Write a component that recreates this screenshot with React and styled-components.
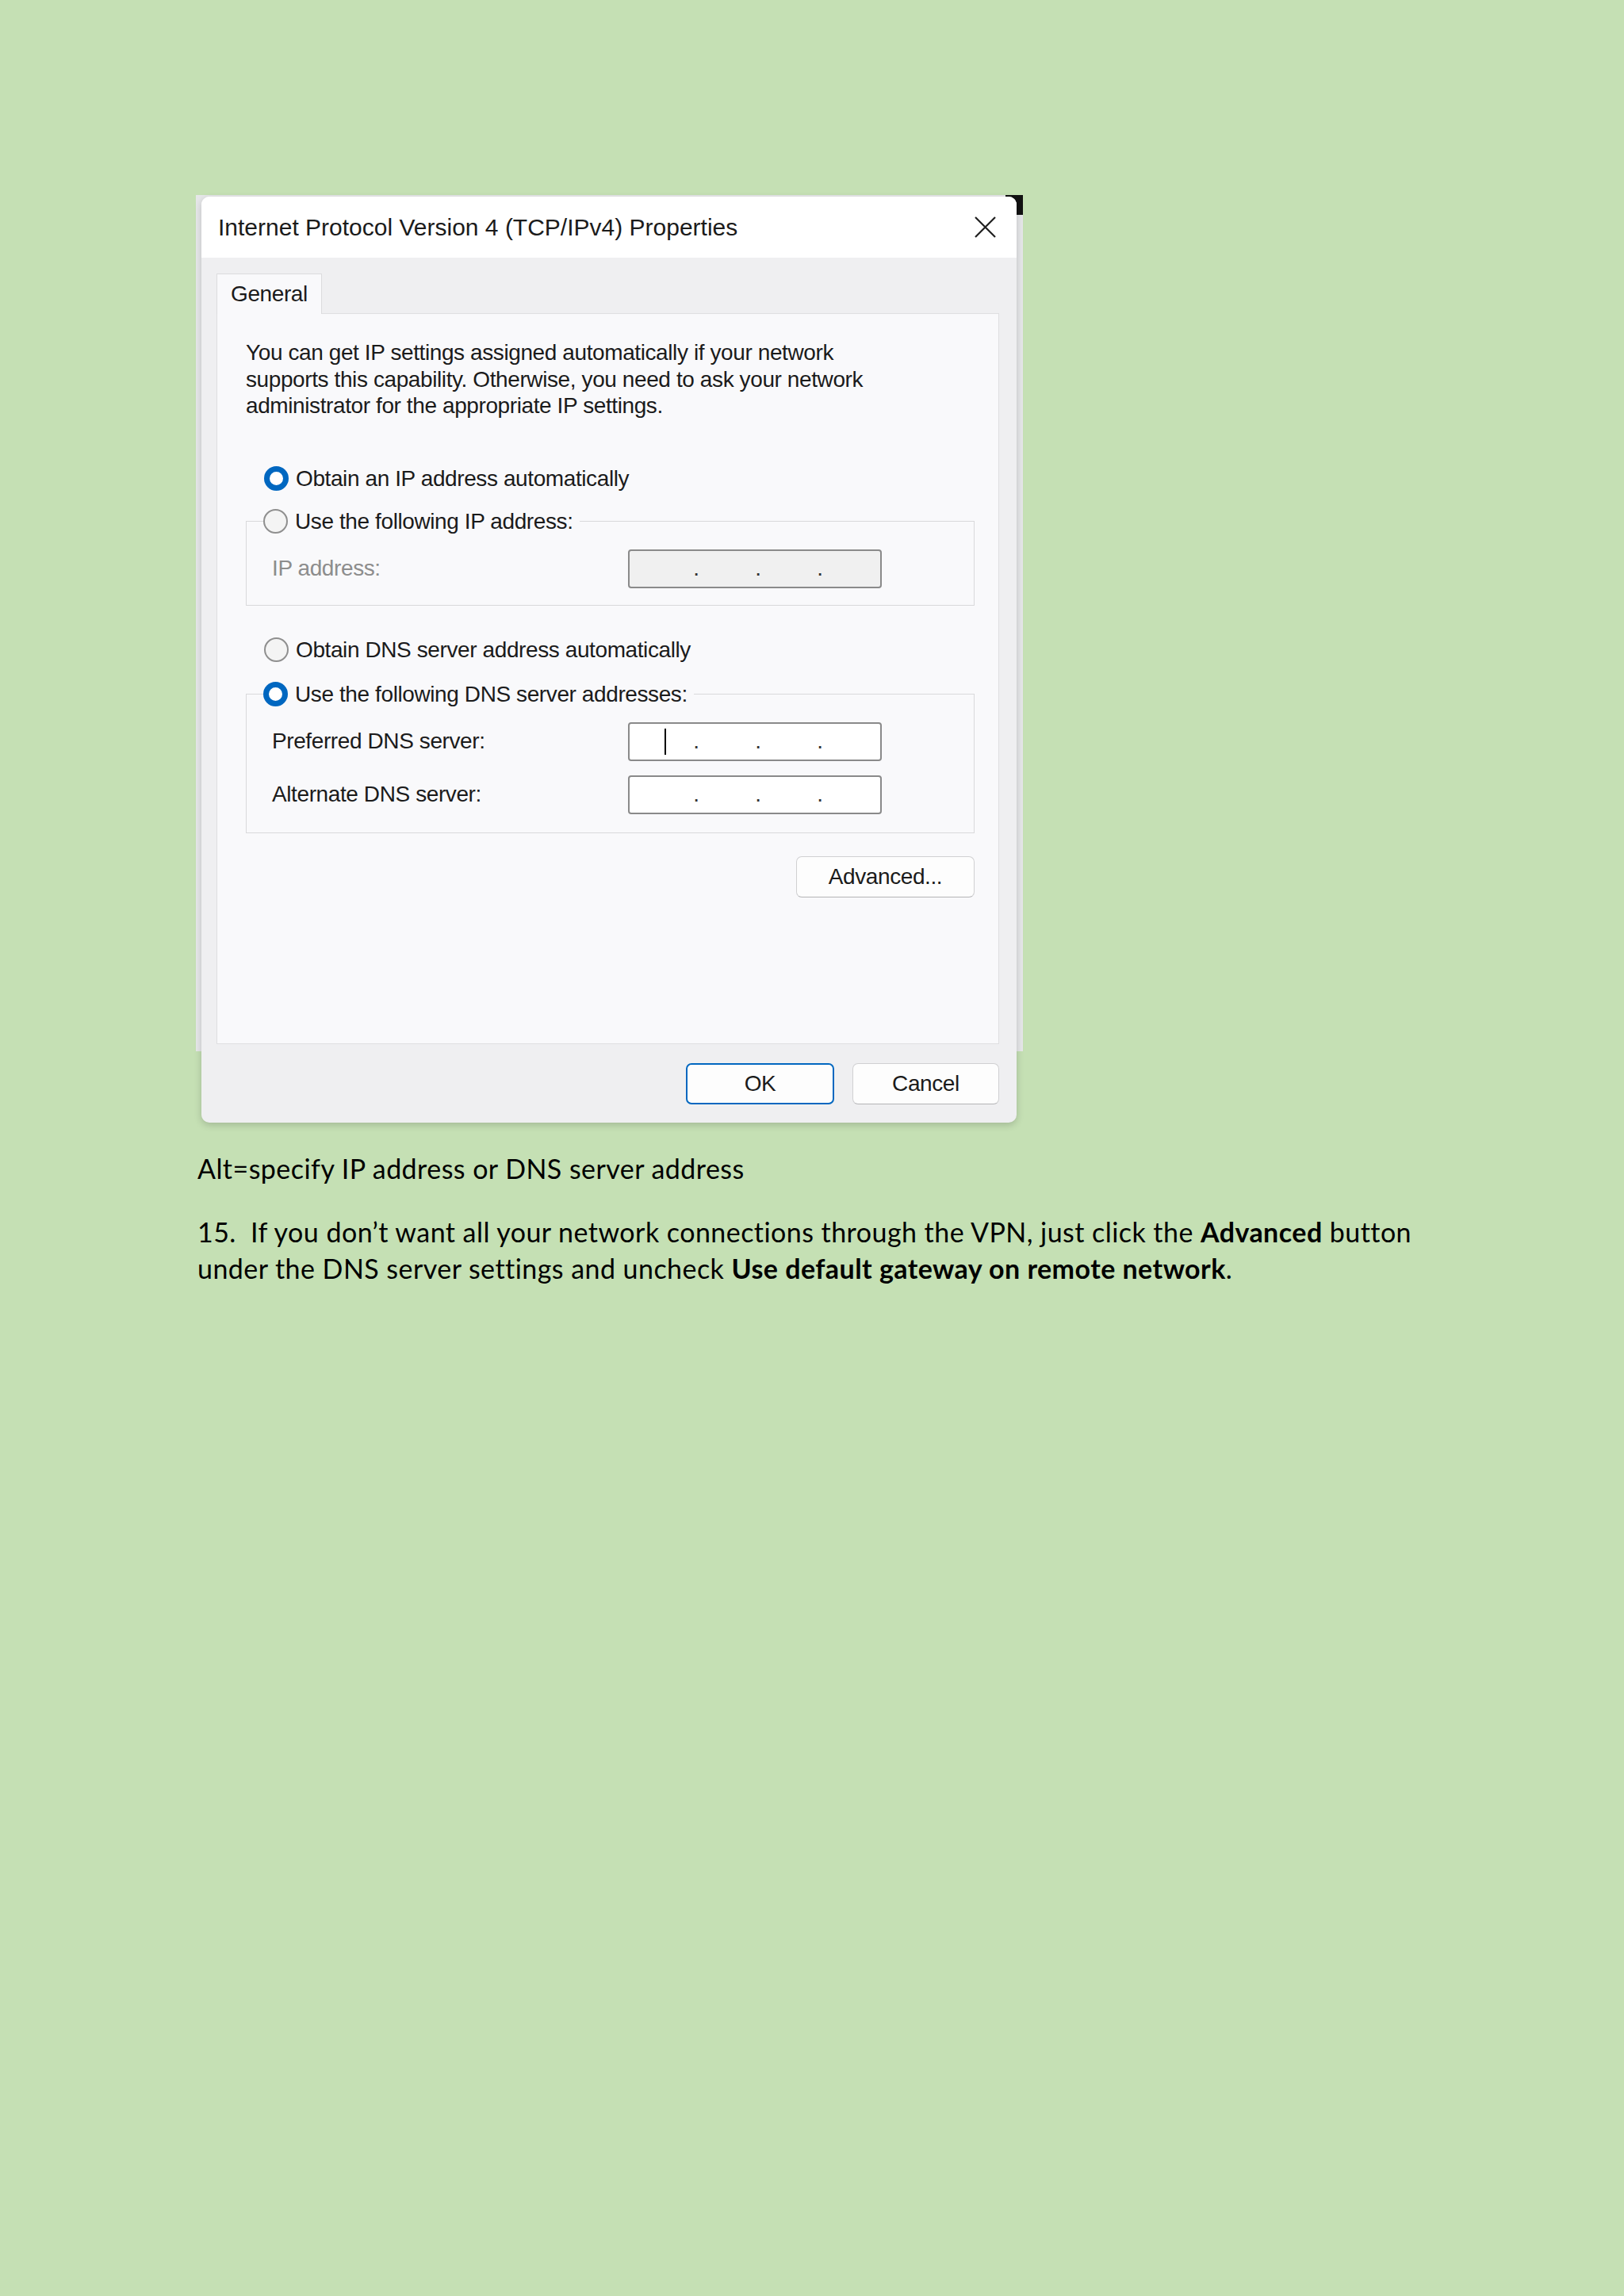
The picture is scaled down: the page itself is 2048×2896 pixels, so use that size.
import React from 'react';
import styled, { createGlobalStyle } from 'styled-components';

const GlobalStyle = createGlobalStyle`
  *, *::before, *::after { box-sizing: border-box; }
  html, body {
    margin: 0;
    padding: 0;
    background: #c5e0b4;
  }
`;

const Page = styled.div`
  width: 2048px;
  min-height: 2896px;
  padding: 248px 0 0 249px;
  background: #c5e0b4;
`;

const Stage = styled.div`
  position: relative;
  width: 1028px;
  margin-left: 5px;
`;

/* the window peeking out behind the dialog */
const BehindWindow = styled.div`
  position: absolute;
  left: -7px;
  top: -2px;
  right: -8px;
  height: 1080px;
  background: #e6e7e9;

  &::after {
    content: '';
    position: absolute;
    top: 0;
    right: 0;
    width: 22px;
    height: 25px;
    background: #121212;
  }
`;

const Dialog = styled.div`
  position: relative;
  background: #efeff1;
  border-radius: 10px;
  box-shadow: 0 3px 10px rgba(0, 0, 0, 0.18);
  overflow: hidden;
  font-family: 'Liberation Sans', Arial, sans-serif;
  color: #1b1b1b;
  letter-spacing: -0.4px;
`;

const TitleBar = styled.div`
  height: 77px;
  background: #ffffff;
  display: flex;
  align-items: center;
  justify-content: space-between;
  padding: 0 26px 0 21px;
  font-size: 30px;
  letter-spacing: 0;
`;

const CloseIcon = () => (
  <svg width="27" height="27" viewBox="0 0 27 27">
    <path d="M1 1 L26 26 M26 1 L1 26" stroke="#1f1f1f" strokeWidth="2.2" fill="none" />
  </svg>
);

const Body = styled.div`
  padding: 20px 22px 23px 19px;
`;

const Tab = styled.div`
  position: relative;
  z-index: 1;
  display: inline-flex;
  align-items: center;
  height: 51px;
  margin-bottom: -1px;
  padding: 0 17px;
  background: #f9f9fb;
  border: 1px solid #dcdcde;
  border-bottom: none;
  font-size: 28px;
`;

const Panel = styled.div`
  height: 922px;
  background: #f9f9fb;
  border: 1px solid #dfdfe1;
  padding: 32px 30px 0 36px;
  display: flex;
  flex-direction: column;
`;

const Intro = styled.p`
  margin: 0 0 59px;
  font-size: 28px;
  line-height: 33.5px;
`;

const RadioRow = styled.div`
  display: flex;
  align-items: center;
  gap: 9px;
  height: 32px;
  margin-left: ${(p) => (p.$inLegend ? '0' : '23px')};
  margin-top: ${(p) => p.$top || 0}px;
  font-size: 28px;
  white-space: nowrap;
`;

const Radio = styled.span`
  flex: none;
  width: 31px;
  height: 31px;
  border-radius: 50%;
  background: #ffffff;
  border: ${(p) => (p.$checked ? '7.5px solid #0067c0' : '2px solid #8f8f8f')};
  ${(p) => !p.$checked && 'background: #f4f4f4;'}
`;

const Group = styled.fieldset`
  margin: ${(p) => p.$top || 0}px 0 0;
  padding: 19px 20px ${(p) => p.$bottom || 21}px 32px;
  border: 1px solid #d9d9db;
  min-width: 0;
`;

const Legend = styled.legend`
  margin-left: -11px;
  padding: 0 8px 0 0;
`;

const FieldRow = styled.div`
  display: grid;
  grid-template-columns: 449px 320px;
  align-items: center;

  & + & {
    margin-top: 18px;
  }
`;

const FieldLabel = styled.span`
  font-size: 28px;
  color: ${(p) => (p.$disabled ? '#8d8d8d' : '#1b1b1b')};
`;

const IpBox = styled.div`
  width: 320px;
  height: 49px;
  border: 2px solid #8a8a8a;
  border-radius: 4px;
  background: ${(p) => (p.$disabled ? '#f0f0f0' : '#ffffff')};
  display: flex;
  align-items: center;
  padding-left: 8px;
`;

const Octet = styled.span`
  width: 74px;
  height: 100%;
  display: flex;
  align-items: center;
  justify-content: center;
`;

const Dot = styled.span`
  width: 4px;
  display: inline-flex;
  justify-content: center;
  font-size: 28px;
  line-height: 1;
  color: #333;
`;

const Caret = styled.span`
  width: 2px;
  height: 33px;
  background: #000;
`;

const IpField = ({ disabled, caret }) => (
  <IpBox $disabled={disabled}>
    <Octet>{caret && <Caret />}</Octet>
    <Dot>.</Dot>
    <Octet />
    <Dot>.</Dot>
    <Octet />
    <Dot>.</Dot>
    <Octet />
  </IpBox>
);

const ButtonRow = styled.div`
  display: flex;
  justify-content: flex-end;
  gap: 23px;
  margin-top: ${(p) => p.$top || 0}px;
`;

const Button = styled.button`
  width: ${(p) => p.$width}px;
  height: 52px;
  border-radius: 7px;
  background: #fdfdfd;
  border: ${(p) => (p.$primary ? '2px solid #0067c0' : '1px solid #d0d0d2')};
  ${(p) => !p.$primary && 'border-bottom-color: #b4b4b6;'}
  font-family: 'Liberation Sans', Arial, sans-serif;
  font-size: 28px;
  letter-spacing: -0.4px;
  color: #1b1b1b;
  padding: 0;
`;

const Doc = styled.div`
  margin-top: 38px;
  font-family: Lato, 'Liberation Sans', sans-serif;
  font-size: 34px;
  letter-spacing: 0.45px;
  color: #000;
  white-space: nowrap;
`;

const Caption = styled.p`
  margin: 0;
  line-height: 40px;
`;

const Step = styled.p`
  margin: 37px 0 0;
  line-height: 46px;

  strong {
    font-weight: 700;
  }
`;

export default function App() {
  return (
    <Page>
      <GlobalStyle />
      <Stage>
        <BehindWindow />
        <Dialog>
          <TitleBar>
            <span>Internet Protocol Version 4 (TCP/IPv4) Properties</span>
            <CloseIcon />
          </TitleBar>
          <Body>
            <Tab>General</Tab>
            <Panel>
              <Intro>
                You can get IP settings assigned automatically if your network
                <br />
                supports this capability. Otherwise, you need to ask your network
                <br />
                administrator for the appropriate IP settings.
              </Intro>

              <RadioRow>
                <Radio $checked />
                Obtain an IP address automatically
              </RadioRow>

              <Group $top={22}>
                <Legend>
                  <RadioRow $inLegend>
                    <Radio />
                    Use the following IP address:
                  </RadioRow>
                </Legend>
                <FieldRow>
                  <FieldLabel $disabled>IP address:</FieldLabel>
                  <IpField disabled />
                </FieldRow>
              </Group>

              <RadioRow $top={40}>
                <Radio />
                Obtain DNS server address automatically
              </RadioRow>

              <Group $top={24} $bottom={23}>
                <Legend>
                  <RadioRow $inLegend>
                    <Radio $checked />
                    Use the following DNS server addresses:
                  </RadioRow>
                </Legend>
                <FieldRow>
                  <FieldLabel>Preferred DNS server:</FieldLabel>
                  <IpField caret />
                </FieldRow>
                <FieldRow>
                  <FieldLabel>Alternate DNS server:</FieldLabel>
                  <IpField />
                </FieldRow>
              </Group>

              <ButtonRow $top={29}>
                <Button $width={225}>Advanced...</Button>
              </ButtonRow>
            </Panel>

            <ButtonRow $top={24}>
              <Button $width={187} $primary>OK</Button>
              <Button $width={185}>Cancel</Button>
            </ButtonRow>
          </Body>
        </Dialog>
      </Stage>

      <Doc>
        <Caption>Alt=specify IP address or DNS server address</Caption>
        <Step>
          15.&nbsp; If you don’t want all your network connections through the VPN, just click the{' '}
          <strong>Advanced</strong> button
          <br />
          under the DNS server settings and uncheck <strong>Use default gateway on remote network</strong>.
        </Step>
      </Doc>
    </Page>
  );
}
